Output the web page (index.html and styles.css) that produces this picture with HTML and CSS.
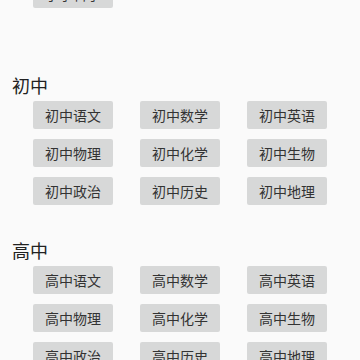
FILE: index.html
```html
<!DOCTYPE html>
<html lang="zh">

<head>
    <meta charset="UTF-8">
    <meta name="viewport" content="width=device-width, initial-scale=1.0">
    <title>科目</title>

    <link rel="stylesheet" href="styles.css">
</head>

<body>
    <div class="page">
        <div class="section first">
            <div class="grid">
                <button class="btn">小学科学</button>
            </div>
        </div>

        <div class="section">
            <div class="title">初中</div>
            <div class="grid">
                <button class="btn">初中语文</button>
                <button class="btn">初中数学</button>
                <button class="btn">初中英语</button>
                <button class="btn">初中物理</button>
                <button class="btn">初中化学</button>
                <button class="btn">初中生物</button>
                <button class="btn">初中政治</button>
                <button class="btn">初中历史</button>
                <button class="btn">初中地理</button>
            </div>
        </div>

        <div class="section">
            <div class="title">高中</div>
            <div class="grid">
                <button class="btn">高中语文</button>
                <button class="btn">高中数学</button>
                <button class="btn">高中英语</button>
                <button class="btn">高中物理</button>
                <button class="btn">高中化学</button>
                <button class="btn">高中生物</button>
                <button class="btn">高中政治</button>
                <button class="btn">高中历史</button>
                <button class="btn">高中地理</button>
            </div>
        </div>
    </div>
</body>

</html>
```

FILE: styles.css
```css
body {
    margin: 0;
    background-color: #fafafa;
    font-family: "Noto Sans CJK SC", "Noto Sans", sans-serif;
    overflow: hidden;
}

.page {
    margin-top: -20px;
}

.section {
    margin-top: 33px;
}

.section.first {
    margin-top: 0;
    margin-bottom: 65px;
}

.title {
    padding-left: 12px;
    font-size: 18px;
    line-height: 24px;
    color: #222;
    margin-bottom: 4px;
}

.grid {
    display: grid;
    grid-template-columns: repeat(3, 80px);
    column-gap: 27px;
    row-gap: 10px;
    padding-left: 33px;
}

.btn {
    height: 28px;
    padding: 0;
    border: none;
    border-radius: 2px;
    background-color: #d7d8d8;
    color: #333;
    font-family: inherit;
    font-size: 14px;
    line-height: 28px;
    cursor: pointer;
}
```
